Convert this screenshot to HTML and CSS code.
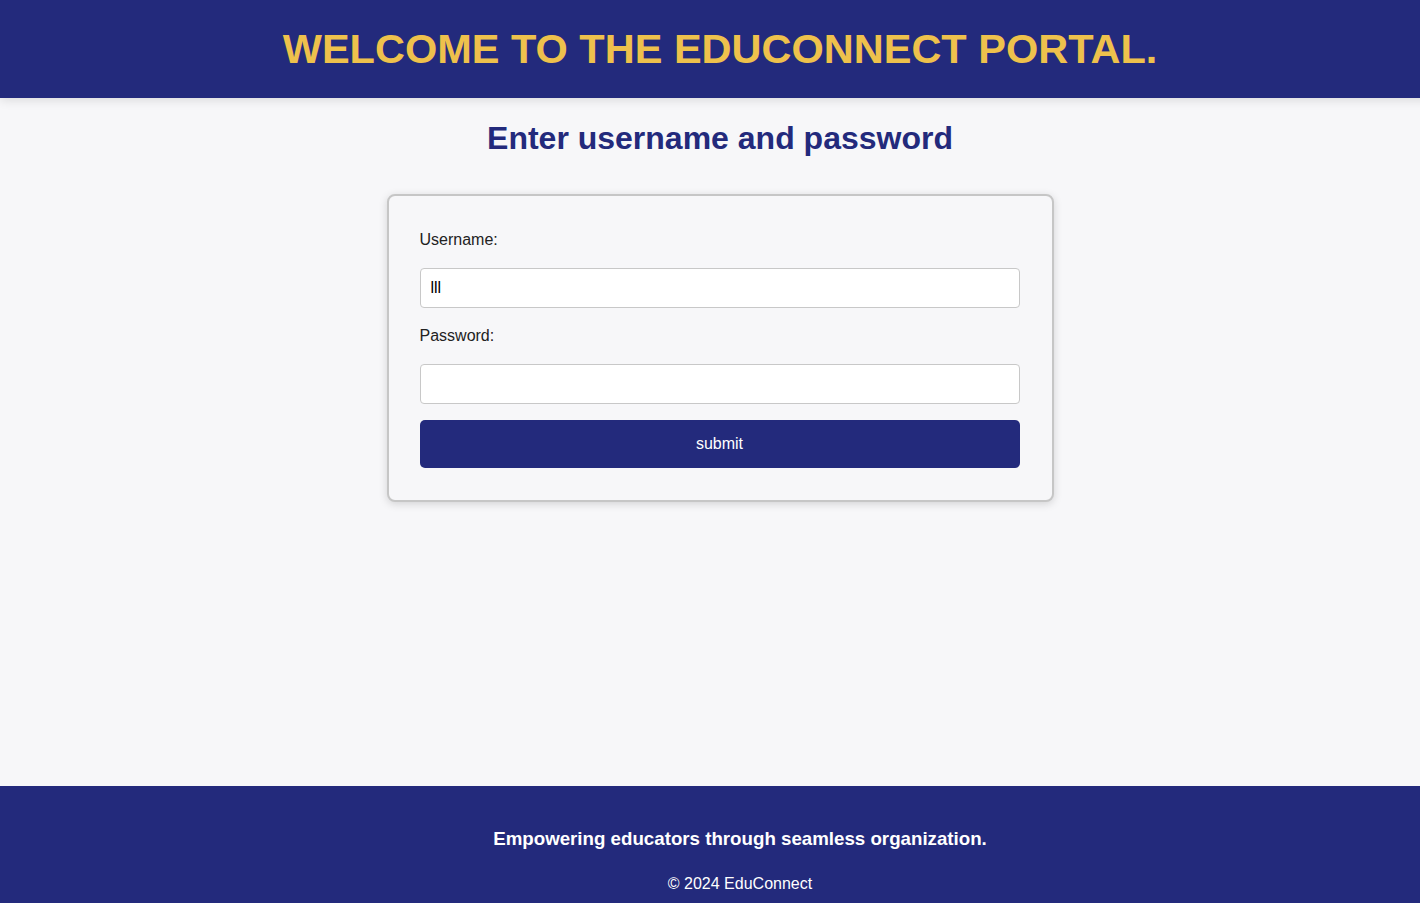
FILE: index.html
```html
<!DOCTYPE html>
<html lang="en">
<head>
<meta charset="utf-8">
<title>EduConnect Portal</title>
<link rel="stylesheet" href="styles.css">
</head>
<body>
<header class="site-header">
  <h1 class="site-title">WELCOME TO THE EDUCONNECT PORTAL.</h1>
</header>
<main class="main">
  <h2 class="page-heading">Enter username and password</h2>
  <form class="login-card">
    <label class="field-label" for="username">Username:</label>
    <input class="field-input" type="text" id="username" value="lll">
    <label class="field-label" for="password">Password:</label>
    <input class="field-input" type="password" id="password">
    <button class="submit-btn" type="button">submit</button>
  </form>
</main>
<footer class="site-footer">
  <h3 class="footer-tagline">Empowering educators through seamless organization.</h3>
  <p class="footer-copy">© 2024 EduConnect</p>
</footer>
</body>
</html>
```
FILE: styles.css
```css
* { box-sizing: border-box; }
html { overflow-x: hidden; }
html, body { margin: 0; padding: 0; }
body {
  font-family: "Liberation Sans", Arial, Helvetica, sans-serif;
  background: #f7f7f9;
  color: #222;
  width: 1440px;
  min-height: 100vh;
  display: flex;
  flex-direction: column;
}
.site-header {
  background: #232a7c;
  height: 98px;
  display: flex;
  align-items: center;
  justify-content: center;
  box-shadow: 0 2px 10px rgba(0,0,0,0.12);
  position: relative;
  z-index: 1;
}
.site-title {
  margin: 0;
  color: #eec14c;
  font-size: 41.5px;
  font-weight: bold;
  line-height: 48px;
}
.main {
  flex: 1;
  display: flex;
  flex-direction: column;
  align-items: center;
}
.page-heading {
  margin: 22px 0 0;
  font-size: 32px;
  line-height: 37px;
  color: #232a7c;
  font-weight: bold;
}
.login-card {
  margin-top: 37px;
  width: 667px;
  border: 2px solid #c6c6c6;
  border-radius: 8px;
  padding: 33px 32px 32px 31px;
  background: #f7f7f9;
  box-shadow: 0 2px 8px rgba(0,0,0,0.15);
  display: flex;
  flex-direction: column;
}
.field-label {
  font-size: 16px;
  line-height: 18px;
  color: #222;
  margin-top: 2px;
  margin-bottom: 19px;
}
.field-input {
  height: 40px;
  width: 100%;
  border: 1px solid #c8c8c8;
  border-radius: 4px;
  background: #fff;
  padding: 0 10px;
  font-family: "Liberation Sans", Arial, sans-serif;
  font-size: 16px;
  color: #000;
  margin-bottom: 17px;
}
.submit-btn {
  margin-top: -1px;
  height: 48px;
  width: 100%;
  border: none;
  border-radius: 5px;
  background: #232a7c;
  color: #fff;
  font-family: "Liberation Sans", Arial, sans-serif;
  font-size: 16px;
}
.site-footer {
  background: #232a7c;
  color: #fff;
  text-align: center;
  padding: 42px 0 10px 40px;
}
.footer-tagline {
  margin: 0;
  font-size: 18.72px;
  line-height: 22px;
  font-weight: bold;
}
.footer-copy {
  margin: 25px 0 0;
  font-size: 16px;
  line-height: 18px;
}
```
